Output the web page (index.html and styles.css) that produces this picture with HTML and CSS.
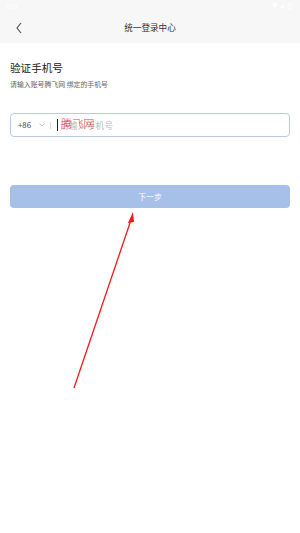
FILE: index.html
```html
<!DOCTYPE html>
<html lang="zh">
<head>
<meta charset="utf-8">
<link rel="stylesheet" href="styles.css">
</head>
<body>
<div class="page">
  <div class="topbar">
    <div class="status">
      <span class="time">8:03</span>
      <span class="icons">
        <svg width="22" height="6" viewBox="0 0 22 6"><path d="M0 0.5 L6 0.5 L3 5 Z" fill="#fff"/><path d="M8 5 L12 1 L12 5 Z" fill="#fff"/><rect x="16" y="0.5" width="3" height="5" rx="0.5" fill="none" stroke="#fff" stroke-width="0.8"/></svg>
      </span>
    </div>
    <div class="nav">
      <svg class="back" width="8" height="12" viewBox="0 0 8 12"><path d="M6 1 L2 6 L6 11" fill="none" stroke="#555" stroke-width="1.2"/></svg>
      <div class="title">统一登录中心</div>
    </div>
  </div>
  <div class="content">
    <h1 class="heading">验证手机号</h1>
    <p class="sub">请输入账号腾飞网 绑定的手机号</p>
    <div class="field">
      <span class="code">+86</span>
      <svg class="chev" width="6" height="4" viewBox="0 0 6 4"><path d="M0.5 0.5 L3 3 L5.5 0.5" fill="none" stroke="#bbb" stroke-width="0.8"/></svg>
      <span class="sep"></span>
      <span class="cursor"></span>
      <span class="ph-wrap"><span class="ph">请输入手机号</span><span class="wm">腾飞网</span></span>
    </div>
    <div class="btn">下一步</div>
  </div>
  <svg class="arrow" width="300" height="533" viewBox="0 0 300 533">
    <line x1="74" y1="388" x2="131" y2="220" stroke="#f01a1a" stroke-width="1.3"/>
    <path d="M133 212 L128 223 L134 222 Z" fill="#f01a1a"/>
  </svg>
</div>
</body>
</html>
```
FILE: styles.css
```css
* { box-sizing: border-box; margin: 0; padding: 0; }
html, body { width: 300px; height: 533px; background: #fff; }
body { font-family: "Noto Sans CJK SC", "Noto Sans", sans-serif; color: #333; }
.page { position: relative; width: 300px; height: 533px; overflow: hidden; }
.topbar { background: #f7f7f7; height: 43px; }
.status { height: 12px; display: flex; justify-content: space-between; align-items: center; padding: 0 6px; color: #fff; font-size: 6px; }
.icons { display: flex; align-items: center; }
.nav { height: 31px; display: flex; align-items: center; justify-content: center; position: relative; }
.back { position: absolute; left: 15px; top: 10px; }
.title { font-size: 8.6px; color: #333; line-height: 1; margin-top: -1px; }
.content { padding: 0 10px; }
.heading { font-size: 10.6px; font-weight: normal; color: #222; margin-top: 18px; line-height: 14px; }
.sub { font-size: 6.9px; color: #666; margin-top: 5px; line-height: 9px; }
.field { margin-top: 24px; height: 24px; border: 1px solid #b9cae9; border-radius: 4px; display: flex; align-items: center; padding-left: 7px; }
.code { font-size: 7.8px; color: #444; line-height: 1; }
.chev { margin-left: 8px; }
.sep { width: 1px; height: 7px; background: #ddd; margin-left: 5px; }
.cursor { width: 1px; height: 12px; background: #222; margin-left: 6px; }
.ph-wrap { position: relative; margin-left: 2px; display: flex; align-items: center; }
.ph { font-size: 8.6px; color: #bbb; line-height: 1; letter-spacing: 0.3px; }
.wm { position: absolute; left: 1px; top: -3px; font-size: 11.2px; font-weight: 300; color: #ee3b3b; line-height: 1; }
.btn { margin-top: 48px; height: 23px; border-radius: 4px; background: #a7c0e8; color: #fff; font-size: 7.8px; display: flex; align-items: center; justify-content: center; }
.arrow { position: absolute; left: 0; top: 0; pointer-events: none; }
```
